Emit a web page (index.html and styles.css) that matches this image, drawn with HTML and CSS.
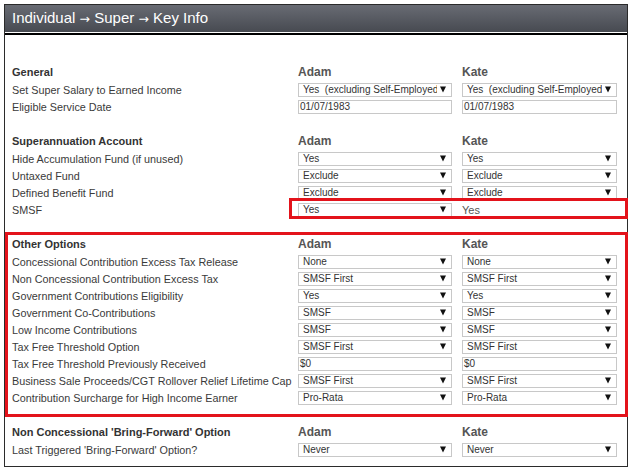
FILE: index.html
```html
<!DOCTYPE html>
<html>
<head>
<meta charset="utf-8">
<link rel="stylesheet" href="styles.css">
</head>
<body>
<div class="panel">
  <div class="title">Individual <span class="ar">→</span> Super <span class="ar">→</span> Key Info</div>
  <div class="rule"></div>
  <div class="content">
    <section class="sec">
      <div class="row head"><span class="hlbl">General</span><span class="who">Adam</span><span class="who">Kate</span></div>
      <div class="row"><span class="lbl">Set Super Salary to Earned Income</span>
        <div class="sel"><span class="val">Yes&nbsp; (excluding Self-Employed)</span><svg class="arr" viewBox="0 0 7 7"><polygon points="0,0 7,0 3.5,7"/></svg></div>
        <div class="sel"><span class="val">Yes&nbsp; (excluding Self-Employed)</span><svg class="arr" viewBox="0 0 7 7"><polygon points="0,0 7,0 3.5,7"/></svg></div>
      </div>
      <div class="row"><span class="lbl">Eligible Service Date</span>
        <div class="inp">01/07/1983</div>
        <div class="inp">01/07/1983</div>
      </div>
    </section>

    <section class="sec">
      <div class="row head"><span class="hlbl">Superannuation Account</span><span class="who">Adam</span><span class="who">Kate</span></div>
      <div class="row"><span class="lbl">Hide Accumulation Fund (if unused)</span>
        <div class="sel"><span class="val">Yes</span><svg class="arr" viewBox="0 0 7 7"><polygon points="0,0 7,0 3.5,7"/></svg></div>
        <div class="sel"><span class="val">Yes</span><svg class="arr" viewBox="0 0 7 7"><polygon points="0,0 7,0 3.5,7"/></svg></div>
      </div>
      <div class="row"><span class="lbl">Untaxed Fund</span>
        <div class="sel"><span class="val">Exclude</span><svg class="arr" viewBox="0 0 7 7"><polygon points="0,0 7,0 3.5,7"/></svg></div>
        <div class="sel"><span class="val">Exclude</span><svg class="arr" viewBox="0 0 7 7"><polygon points="0,0 7,0 3.5,7"/></svg></div>
      </div>
      <div class="row"><span class="lbl">Defined Benefit Fund</span>
        <div class="sel"><span class="val">Exclude</span><svg class="arr" viewBox="0 0 7 7"><polygon points="0,0 7,0 3.5,7"/></svg></div>
        <div class="sel"><span class="val">Exclude</span><svg class="arr" viewBox="0 0 7 7"><polygon points="0,0 7,0 3.5,7"/></svg></div>
      </div>
      <div class="row mark-smsf"><span class="lbl">SMSF</span>
        <div class="sel"><span class="val">Yes</span><svg class="arr" viewBox="0 0 7 7"><polygon points="0,0 7,0 3.5,7"/></svg></div>
        <span class="plain">Yes</span>
      </div>
    </section>

    <section class="sec mark-other">
      <div class="row head"><span class="hlbl">Other Options</span><span class="who">Adam</span><span class="who">Kate</span></div>
      <div class="row"><span class="lbl">Concessional Contribution Excess Tax Release</span>
        <div class="sel"><span class="val">None</span><svg class="arr" viewBox="0 0 7 7"><polygon points="0,0 7,0 3.5,7"/></svg></div>
        <div class="sel"><span class="val">None</span><svg class="arr" viewBox="0 0 7 7"><polygon points="0,0 7,0 3.5,7"/></svg></div>
      </div>
      <div class="row"><span class="lbl">Non Concessional Contribution Excess Tax</span>
        <div class="sel"><span class="val">SMSF First</span><svg class="arr" viewBox="0 0 7 7"><polygon points="0,0 7,0 3.5,7"/></svg></div>
        <div class="sel"><span class="val">SMSF First</span><svg class="arr" viewBox="0 0 7 7"><polygon points="0,0 7,0 3.5,7"/></svg></div>
      </div>
      <div class="row"><span class="lbl">Government Contributions Eligibility</span>
        <div class="sel"><span class="val">Yes</span><svg class="arr" viewBox="0 0 7 7"><polygon points="0,0 7,0 3.5,7"/></svg></div>
        <div class="sel"><span class="val">Yes</span><svg class="arr" viewBox="0 0 7 7"><polygon points="0,0 7,0 3.5,7"/></svg></div>
      </div>
      <div class="row"><span class="lbl">Government Co-Contributions</span>
        <div class="sel"><span class="val">SMSF</span><svg class="arr" viewBox="0 0 7 7"><polygon points="0,0 7,0 3.5,7"/></svg></div>
        <div class="sel"><span class="val">SMSF</span><svg class="arr" viewBox="0 0 7 7"><polygon points="0,0 7,0 3.5,7"/></svg></div>
      </div>
      <div class="row"><span class="lbl">Low Income Contributions</span>
        <div class="sel"><span class="val">SMSF</span><svg class="arr" viewBox="0 0 7 7"><polygon points="0,0 7,0 3.5,7"/></svg></div>
        <div class="sel"><span class="val">SMSF</span><svg class="arr" viewBox="0 0 7 7"><polygon points="0,0 7,0 3.5,7"/></svg></div>
      </div>
      <div class="row"><span class="lbl">Tax Free Threshold Option</span>
        <div class="sel"><span class="val">SMSF First</span><svg class="arr" viewBox="0 0 7 7"><polygon points="0,0 7,0 3.5,7"/></svg></div>
        <div class="sel"><span class="val">SMSF First</span><svg class="arr" viewBox="0 0 7 7"><polygon points="0,0 7,0 3.5,7"/></svg></div>
      </div>
      <div class="row"><span class="lbl">Tax Free Threshold Previously Received</span>
        <div class="inp">$0</div>
        <div class="inp">$0</div>
      </div>
      <div class="row"><span class="lbl">Business Sale Proceeds/CGT Rollover Relief Lifetime Cap</span>
        <div class="sel"><span class="val">SMSF First</span><svg class="arr" viewBox="0 0 7 7"><polygon points="0,0 7,0 3.5,7"/></svg></div>
        <div class="sel"><span class="val">SMSF First</span><svg class="arr" viewBox="0 0 7 7"><polygon points="0,0 7,0 3.5,7"/></svg></div>
      </div>
      <div class="row"><span class="lbl">Contribution Surcharge for High Income Earner</span>
        <div class="sel"><span class="val">Pro-Rata</span><svg class="arr" viewBox="0 0 7 7"><polygon points="0,0 7,0 3.5,7"/></svg></div>
        <div class="sel"><span class="val">Pro-Rata</span><svg class="arr" viewBox="0 0 7 7"><polygon points="0,0 7,0 3.5,7"/></svg></div>
      </div>
    </section>

    <section class="sec">
      <div class="row head"><span class="hlbl">Non Concessional 'Bring-Forward' Option</span><span class="who">Adam</span><span class="who">Kate</span></div>
      <div class="row"><span class="lbl">Last Triggered 'Bring-Forward' Option?</span>
        <div class="sel"><span class="val">Never</span><svg class="arr" viewBox="0 0 7 7"><polygon points="0,0 7,0 3.5,7"/></svg></div>
        <div class="sel"><span class="val">Never</span><svg class="arr" viewBox="0 0 7 7"><polygon points="0,0 7,0 3.5,7"/></svg></div>
      </div>
    </section>
  </div>
</div>
</body>
</html>
```

FILE: styles.css
```css
* { box-sizing: border-box; }

body {
  margin: 0;
  background: #fff;
  font-family: "Liberation Sans", Arial, sans-serif;
}

.panel {
  margin: 4px 0 0 4px;
  width: 624px;
  border: 1px solid #2b2b2b;
  border-top: none;
}

.title {
  height: 28px;
  border-top: 1px solid #2a2a2a;
  background: linear-gradient(to bottom, #686b73, #474a51);
  color: #fff;
  font-size: 15px;
  line-height: 26px;
  padding-left: 7px;
  white-space: nowrap;
}
.title .ar {
  font-family: "DejaVu Sans", sans-serif;
  font-size: 12.5px;
}

.rule {
  height: 3px;
  border-top: 1px solid #fff;
  background: #000;
}

.content {
  padding: 28px 10px 8px 7px;
}

.sec { position: relative; }
.sec + .sec { margin-top: 17px; }

.row {
  display: grid;
  grid-template-columns: 276px 154px 155px;
  column-gap: 10px;
  height: 17px;
  align-items: center;
}
.row.head { height: 18px; }

.lbl {
  font-size: 10.8px;
  color: #3a3a3a;
  white-space: nowrap;
}
.hlbl {
  font-size: 11px;
  font-weight: bold;
  color: #333;
  white-space: nowrap;
}
.who {
  font-size: 12px;
  font-weight: bold;
  color: #555;
}

.sel {
  height: 14px;
  border: 1px solid #c8c8c8;
  background: #fff;
  display: flex;
  align-items: center;
}
.sel .val {
  flex: 1;
  min-width: 0;
  overflow: hidden;
  white-space: nowrap;
  font-size: 10px;
  color: #333;
  padding-left: 4px;
  margin-right: 3px;
}
.sel .arr {
  width: 6px;
  height: 7px;
  margin-right: 5px;
  fill: #111;
  flex: none;
}

.inp {
  height: 14px;
  border: 1px solid #c8c8c8;
  background: #fff;
  font-size: 10px;
  line-height: 12px;
  color: #333;
  padding-left: 1px;
}

.plain {
  font-size: 11px;
  color: #555;
}

.mark-smsf { position: relative; }
.mark-smsf::after {
  content: "";
  position: absolute;
  top: -3px;
  bottom: -1px;
  left: 277px;
  right: -11px;
  border: 3px solid #e3131b;
}

.mark-other::after {
  content: "";
  position: absolute;
  top: -3px;
  bottom: -11px;
  left: -7px;
  right: -11px;
  border: 3px solid #e3131b;
}
```
